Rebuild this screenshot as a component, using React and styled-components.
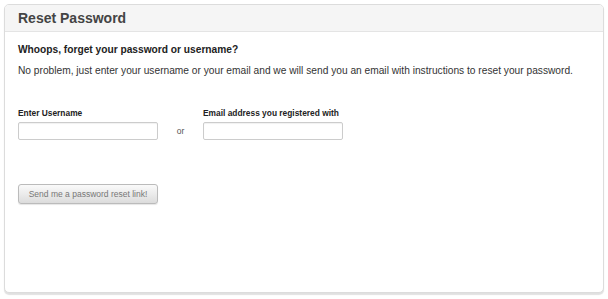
import styled, { createGlobalStyle } from 'styled-components';

const GlobalStyle = createGlobalStyle`
  html, body {
    margin: 0;
    padding: 0;
    background: #ffffff;
  }
  body {
    font-family: "Liberation Sans", Arial, sans-serif;
  }
`;

function App() {
  return (
    <Page>
      <GlobalStyle />
      <Panel>
        <Header>
          <Title>Reset Password</Title>
        </Header>
        <Body>
          <Question>Whoops, forget your password or username?</Question>
          <Intro>
            No problem, just enter your username or your email and we will send you an email with instructions to reset your password.
          </Intro>
          <Fields>
            <Field>
              <Label>Enter Username</Label>
              <Input type="text" />
            </Field>
            <Or>or</Or>
            <Field>
              <Label>Email address you registered with</Label>
              <Input type="text" />
            </Field>
          </Fields>
          <SubmitButton type="button">Send me a password reset link!</SubmitButton>
        </Body>
      </Panel>
    </Page>
  );
}

const Page = styled.div`
  padding: 4px 4px 6px 4px;
  width: 608px;
  height: 299px;
  box-sizing: border-box;
`;

const Panel = styled.div`
  height: 289px;
  box-sizing: border-box;
  border: 1px solid #dcdcdc;
  border-radius: 5px;
  background: #fff;
  box-shadow: 0 2px 1px rgba(0, 0, 0, 0.12);
  overflow: hidden;
  display: flex;
  flex-direction: column;
`;

const Header = styled.div`
  height: 26px;
  background: #f5f5f5;
  border-bottom: 1px solid #e4e4e4;
  display: flex;
  align-items: center;
  padding: 0 13px;
`;

const Title = styled.h1`
  margin: 0;
  font-size: 14px;
  font-weight: bold;
  color: #444;
`;

const Body = styled.div`
  padding: 11px 13px;
  display: flex;
  flex-direction: column;
`;

const Question = styled.div`
  font-size: 10.2px;
  font-weight: bold;
  color: #222;
  line-height: 14px;
`;

const Intro = styled.p`
  margin: 6px 0 0;
  font-size: 10.2px;
  color: #333;
  line-height: 15px;
  white-space: nowrap;
`;

const Fields = styled.div`
  display: flex;
  align-items: flex-end;
  margin-top: 29px;
`;

const Field = styled.div`
  display: flex;
  flex-direction: column;
`;

const Label = styled.label`
  font-size: 8.4px;
  font-weight: bold;
  color: #222;
  line-height: 12px;
  margin-bottom: 3px;
`;

const Input = styled.input`
  width: 140px;
  height: 18px;
  box-sizing: border-box;
  border: 1px solid #ccc;
  border-radius: 2px;
  box-shadow: inset 0 1px 1px rgba(0, 0, 0, 0.06);
  padding: 2px 4px;
`;

const Or = styled.span`
  width: 45px;
  text-align: center;
  font-size: 8.5px;
  color: #555;
  line-height: 18px;
`;

const SubmitButton = styled.button`
  align-self: flex-start;
  margin-top: 44px;
  width: 140px;
  height: 20px;
  border: 1px solid #bbb;
  border-radius: 3px;
  background: linear-gradient(#fafafa, #dcdcdc);
  box-shadow: 0 1px 1px rgba(0, 0, 0, 0.1);
  font-family: "Liberation Sans", Arial, sans-serif;
  font-size: 8.5px;
  color: #777;
  padding: 0;
`;

export default App;
